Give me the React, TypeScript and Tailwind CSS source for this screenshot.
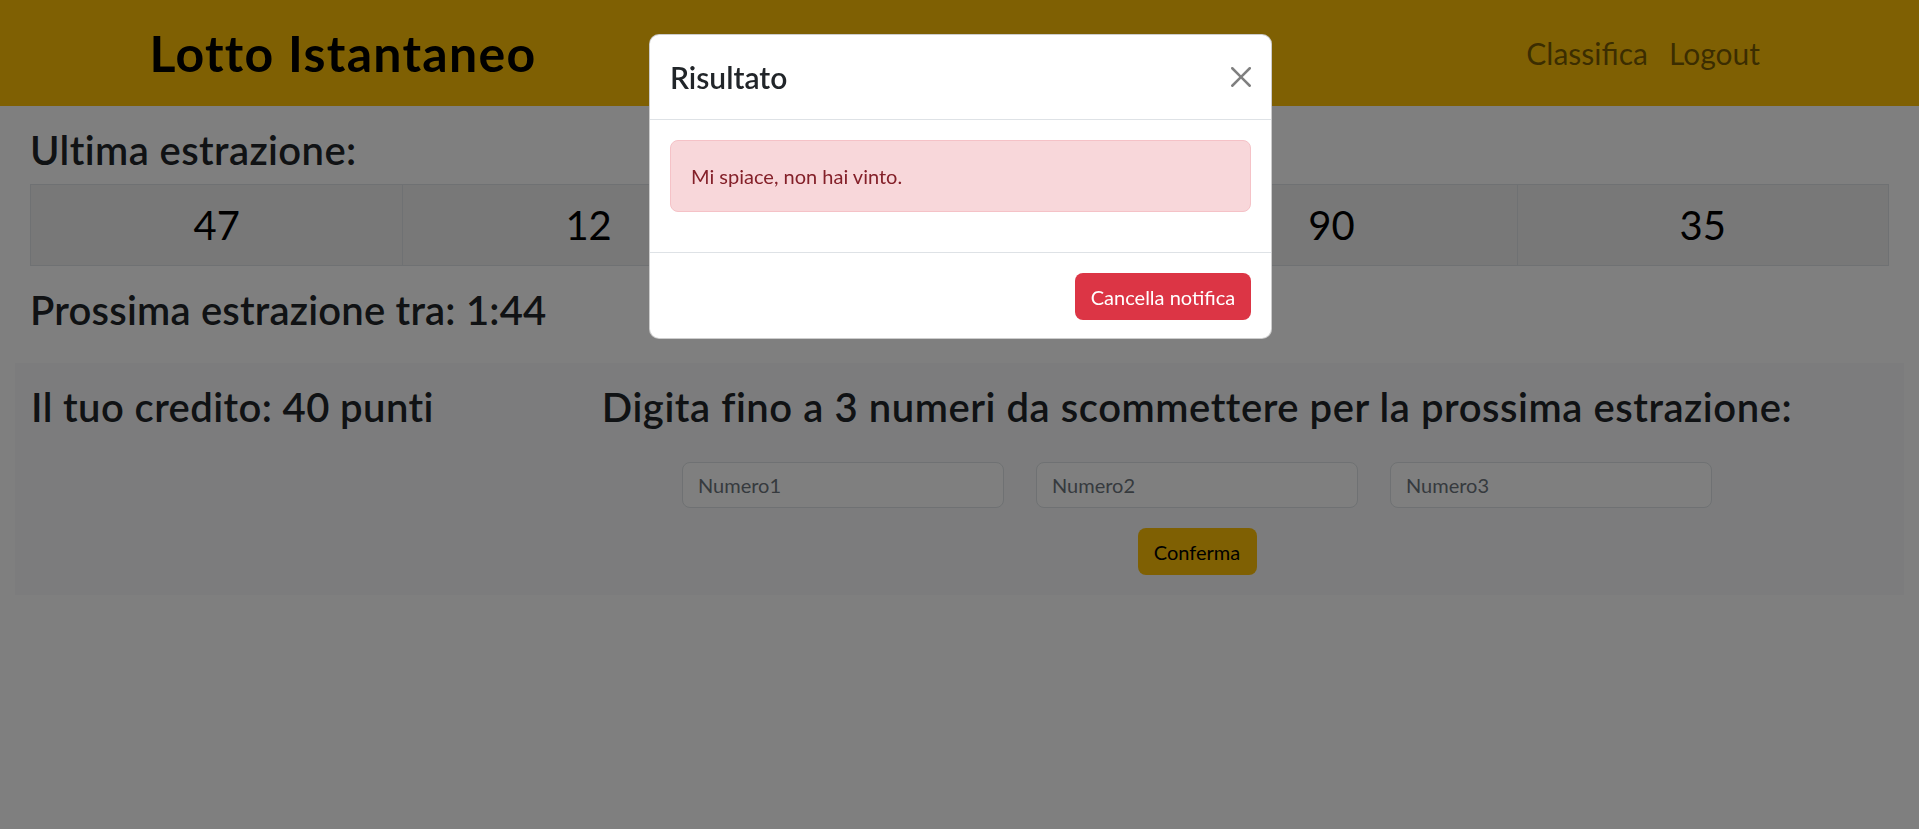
import React from 'react';

const numeri = [47, 12, 58, 90, 35];

function CloseIcon() {
  return (
    <svg viewBox="0 0 16 16" className="w-[20px] h-[20px]" fill="#000" fillOpacity={0.5}>
      <path d="M.293.293a1 1 0 0 1 1.414 0L8 6.586 14.293.293a1 1 0 1 1 1.414 1.414L9.414 8l6.293 6.293a1 1 0 0 1-1.414 1.414L8 9.414l-6.293 6.293a1 1 0 0 1-1.414-1.414L6.586 8 .293 1.707a1 1 0 0 1 0-1.414z" />
    </svg>
  );
}

// Modal "Risultato" aperto sopra la pagina
function ResultModal() {
  return (
    <div className="fixed left-[649px] top-[34px] z-20 w-[623px] rounded-[10px] border border-black/20 bg-white text-[#212529]">
      <div className="flex h-[85px] items-center justify-between border-b border-[#dee2e6] px-[20px]">
        <h4 className="text-[30px] font-semibold leading-[1.2]">Risultato</h4>
        <button className="flex h-[20px] w-[20px] items-center justify-center">
          <CloseIcon />
        </button>
      </div>
      <div className="p-[20px]">
        <div className="mb-[20px] rounded-[8px] border border-[#f5c2c7] bg-[#f8d7da] px-[20px] py-[20px] text-[20px] leading-[30px] text-[#842029]">
          Mi spiace, non hai vinto.
        </div>
      </div>
      <div className="flex justify-end border-t border-[#dee2e6] px-[20px] pt-[20px] pb-[18px]">
        <button className="h-[47px] w-[176px] rounded-[8px] bg-[#dc3545] text-[20px] text-white">
          Cancella notifica
        </button>
      </div>
    </div>
  );
}

export default function App() {
  return (
    <div className="relative min-h-screen bg-white font-['Lato','Liberation_Sans',sans-serif] text-[#212529]">
      {/* Navbar */}
      <nav className="flex h-[106px] items-center bg-[#ffc107]">
        <div className="w-[686px] text-center text-[50px] font-bold leading-[1.2] tracking-[1.3px] text-black">Lotto Istantaneo</div>
        <div className="ml-auto mr-[159px] flex gap-[21px] text-[30px] text-black/55">
          <a href="#">Classifica</a>
          <a href="#">Logout</a>
        </div>
      </nav>

      <main className="px-[30px] pt-[20px]">
        <h2 className="mb-[10px] text-[40px] font-semibold leading-[48px] tracking-[0.4px]">Ultima estrazione:</h2>
        <div className="grid grid-cols-5 border border-[#dee2e6] bg-[#f0f0f0]">
          {numeri.map((n, i) => (
            <div
              key={i}
              className={`flex h-[80px] items-center justify-center text-[40px] text-black ${i > 0 ? 'border-l border-[#dee2e6]' : ''}`}
            >
              {n}
            </div>
          ))}
        </div>
        <h2 className="mt-[20px] text-[40px] font-semibold leading-[48px] tracking-[0.2px]">Prossima estrazione tra: 1:44</h2>
      </main>

      {/* Pannello scommessa */}
      <section className="mx-[15px] mt-[29px] flex bg-[#f8f9fa] pl-[16px] pt-[20px] pb-[20px]">
        <div className="w-[569px] shrink-0">
          <h2 className="text-[40px] font-semibold leading-[48px] tracking-[0.4px]">Il tuo credito: 40 punti</h2>
        </div>
        <div className="flex w-[1194px] shrink-0 flex-col items-center">
          <h2 className="mb-[10px] whitespace-nowrap text-[40px] font-semibold leading-[48px] tracking-[0.55px]">
            Digita fino a 3 numeri da scommettere per la prossima estrazione:
          </h2>
          <div className="mt-[21px] flex gap-[32px]">
            {['Numero1', 'Numero2', 'Numero3'].map((p) => (
              <input
                key={p}
                placeholder={p}
                className="h-[46px] w-[322px] rounded-[8px] border border-[#dee2e6] bg-white px-[15px] text-[20px] outline-none placeholder:text-[#6c757d]"
              />
            ))}
          </div>
          <button className="mt-[20px] h-[47px] w-[119px] rounded-[8px] bg-[#ffc107] text-[20px] text-black">Conferma</button>
        </div>
      </section>

      <div className="fixed inset-0 z-10 bg-black/50" />
      <ResultModal />
    </div>
  );
}
